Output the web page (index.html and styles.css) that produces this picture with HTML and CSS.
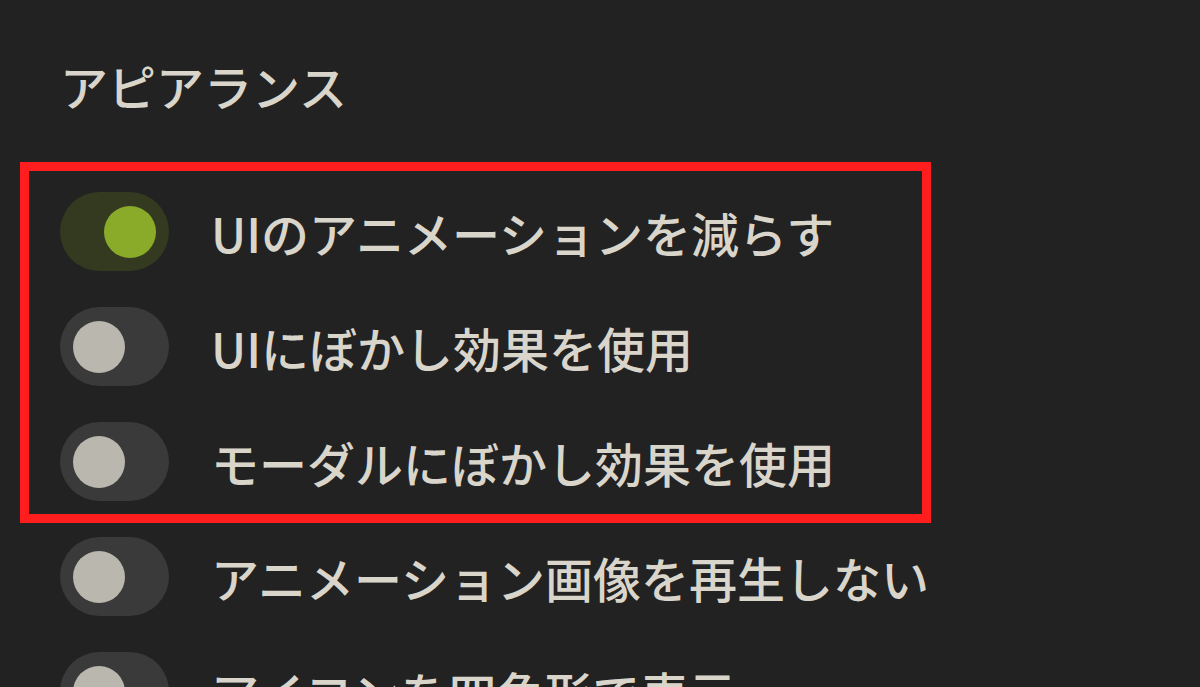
FILE: index.html
```html
<!DOCTYPE html>
<html lang="ja">
<head>
<meta charset="utf-8">
<title>アピアランス</title>
<link rel="stylesheet" href="styles.css">
</head>
<body>
<main class="page">
  <h2 class="section-title">アピアランス</h2>
  <ul class="options">
    <li class="option">
      <span class="switch is-on"><span class="knob"></span></span>
      <span class="label">UIのアニメーションを減らす</span>
    </li>
    <li class="option">
      <span class="switch"><span class="knob"></span></span>
      <span class="label">UIにぼかし効果を使用</span>
    </li>
    <li class="option">
      <span class="switch"><span class="knob"></span></span>
      <span class="label">モーダルにぼかし効果を使用</span>
    </li>
    <li class="option">
      <span class="switch"><span class="knob"></span></span>
      <span class="label">アニメーション画像を再生しない</span>
    </li>
    <li class="option">
      <span class="switch"><span class="knob"></span></span>
      <span class="label">アイコンを四角形で表示</span>
    </li>
  </ul>
  <div class="highlight"></div>
</main>
</body>
</html>
```

FILE: styles.css
```css
html, body {
  margin: 0;
  padding: 0;
  height: 100%;
}
body {
  background: #222222;
  overflow: hidden;
  font-family: "Noto Sans CJK JP", "Noto Sans", sans-serif;
  color: #d9d5cb;
}
.page {
  position: relative;
  padding: 53px 0 0 60px;
}
.section-title {
  margin: 0;
  font-size: 48px;
  font-weight: 500;
  line-height: 64px;
  height: 64px;
}
.options {
  list-style: none;
  margin: 75px 0 0;
  padding: 0;
  display: flex;
  flex-direction: column;
  gap: 36px;
}
.option {
  display: flex;
  align-items: center;
  gap: 42px;
  height: 79px;
}
.switch {
  flex: none;
  width: 109px;
  height: 79px;
  border-radius: 40px;
  background: #3a3a3a;
  display: flex;
  align-items: center;
  padding: 0 13px;
  box-sizing: border-box;
}
.knob {
  width: 52px;
  height: 52px;
  border-radius: 50%;
  background: #b9b7ae;
}
.switch.is-on {
  background: #343a20;
  justify-content: flex-end;
}
.switch.is-on .knob {
  background: #8aab29;
}
.label {
  font-size: 48px;
  font-weight: 500;
  line-height: 1;
  white-space: nowrap;
}
.highlight {
  position: absolute;
  left: 20px;
  top: 162px;
  width: 911px;
  height: 361px;
  box-sizing: border-box;
  border: 9px solid #ff1d1d;
  pointer-events: none;
}
```
